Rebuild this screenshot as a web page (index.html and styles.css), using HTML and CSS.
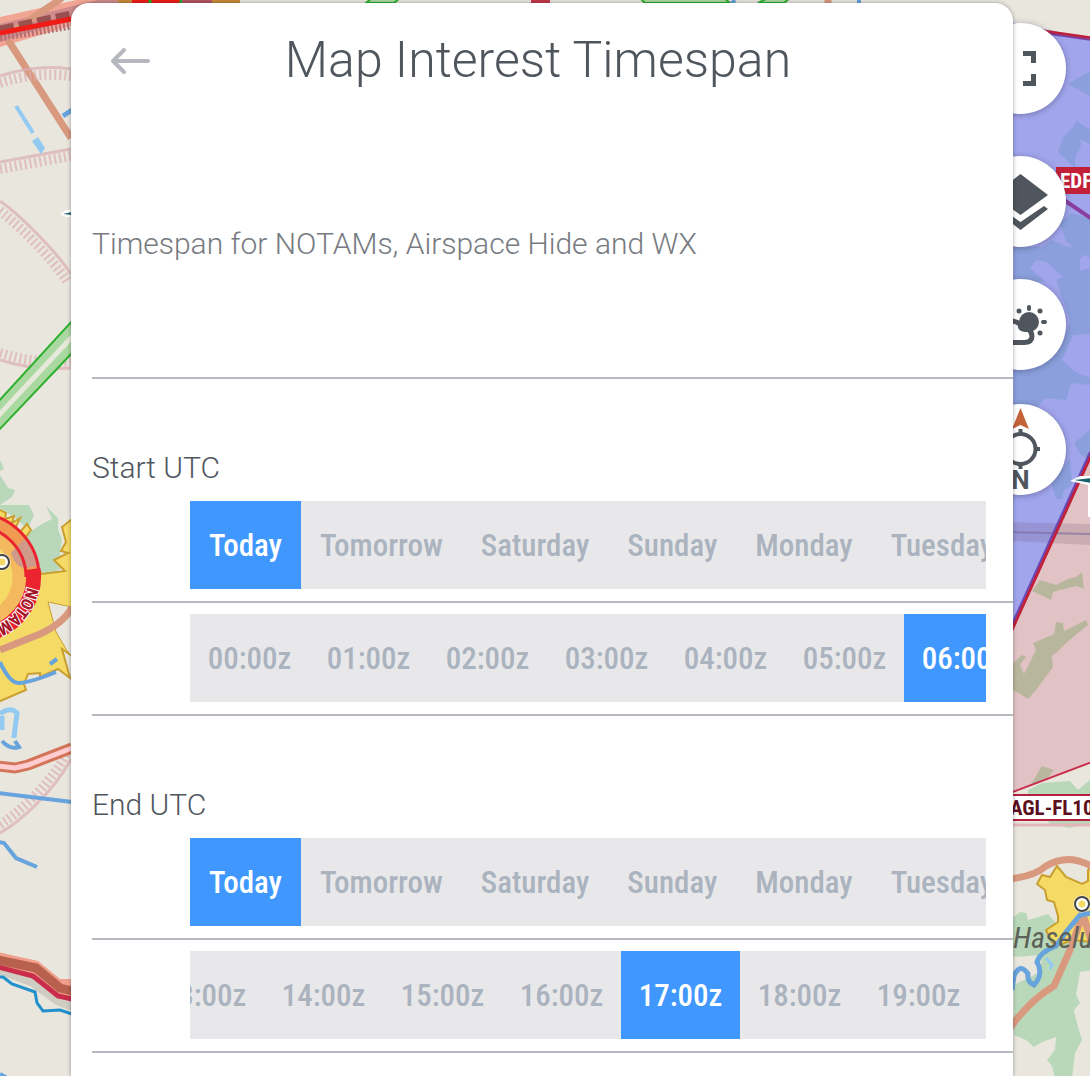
FILE: index.html
```html
<!DOCTYPE html>
<html lang="en">
<head>
<meta charset="utf-8">
<meta name="viewport" content="width=device-width, initial-scale=1">
<title>Map Interest Timespan</title>
<link rel="stylesheet" href="styles.css">
</head>
<body>
<div class="app">
  <svg class="map" viewBox="0 0 1090 1076" preserveAspectRatio="xMidYMin slice" aria-hidden="true">
    <rect width="1090" height="1076" fill="#e9e6de"/>

    <!-- north-west airway and roads -->
    <path d="M0 17L90-3H168L0 47Z" fill="#f3a594"/>
    <path d="M0 24L110-3H140L0 42Z" fill="#cf8c8c"/>
    <path d="M0 37L71 25" stroke="#b56f73" stroke-width="9" stroke-dasharray="2 2"/>
    <path d="M15 30L62-2M8 40L71 138" stroke="#d8997f" stroke-width="7" fill="none"/>
    <path d="M0 29L71 14" stroke="#8c4243" stroke-width="7" stroke-dasharray="14 5" opacity=".8"/>
    <path d="M0 33L71 19" stroke="#f01c18" stroke-width="5"/>
    <path d="M118 1H132M212 1H240" stroke="#c98a3a" stroke-width="5"/>
    <path d="M132 1H180" stroke="#f01c18" stroke-width="5"/>
    <path d="M150 0V3M181 0V3" stroke="#22b022" stroke-width="3"/>
    <path d="M182 1H212" stroke="#b35562" stroke-width="5"/>
    <path d="M366 3L372-2H400L394 3ZM645 3L640-2H724L730 3ZM758 3L768-2H790L784 3Z" fill="#a9d8a0" stroke="#2eb02e" stroke-width="2"/>
    <path d="M531 1H550" stroke="#c5384c" stroke-width="5"/>
    <path d="M828 0V4" stroke="#d8997f" stroke-width="7"/>
    <path d="M859 0V4M735 0L731 4" stroke="#67a3dc" stroke-width="4"/>

    <!-- restricted area rims with hatching -->
    <g fill="none" stroke="#dcaeb2" opacity=".7">
      <path stroke-width="3" d="M0 76C25 68 50 66 71 69M0 162L71 149M0 201C20 215 55 250 71 274M0 360C25 368 50 370 71 368M0 833C20 822 55 790 71 759"/>
      <path stroke-width="10" stroke-dasharray="2 3" d="M0 83C25 75 50 73 71 76M0 169L71 156M-4 208C16 222 51 257 67 281M0 353C25 361 50 363 71 361M-4 827C16 816 51 784 67 753"/>
    </g>
    <path d="M16 106L33 133" stroke="#92caf2" stroke-width="4"/>
    <path d="M32 141L38 137L45 148L41 154Z" fill="#92caf2"/>
    <path d="M63 116L72 110" stroke="#67a3dc" stroke-width="5"/>
    <path d="M60 214L66 210H72V217H66Z" fill="#fff"/>
    <path d="M63 214L72 212V215Z" fill="#17606b"/>
    <path d="M-2 402L72 321V353L-2 431Z" fill="#a9d8a0" stroke="#2eb02e" stroke-width="2"/>
    <path d="M-2 416L72 337" stroke="#e6e8da" stroke-width="5"/>

    <!-- woodland and town, west -->
    <path d="M0 460L4 469L0 471V475L8 488L15 490L12 497L0 505H29L34 515L27 530L20 545L34 570L50 574L62 568L60 552L62 540L58 529V518L46 506L52 519L42 524L30 532L18 520L0 508Z" fill="#b9d8ba"/>
    <path d="M0 510L6 513L5 519L14 516L12 523L20 518L15 529L20 532L27 524L31 530L20 545L42 574L65 571L54 560L68 553L61 551L66 542L62 527L72 519V656L62 649L70 678L58 669L40 677V673L28 674L26 679L24 684L26 690L-2 702V510Z" fill="#f5da66" stroke="#c9a030" stroke-width="2"/>
    <path d="M48 602L72 607V657L66 649L56 632Z" fill="#e9e6de" stroke="#c9a030" stroke-width="1"/>
    <circle cx="-25" cy="577" r="57" fill="#f5da66"/>
    <circle cx="-25" cy="577" r="44" fill="none" stroke="#f4b85e" stroke-width="13"/>
    <circle cx="-25" cy="577" r="58" fill="none" stroke="#f09a52" stroke-width="14"/>
    <path d="M11 553Q16 568 26 568L40 565Q35 549 24 539Z" fill="#cf9a8a"/>
    <path d="M-25 513A64 64 0 0 1 39 577M-25 526A51 51 0 0 1 26 577" fill="none" stroke="#ec2330" stroke-width="3"/>
    <path d="M33 569A58 58 0 0 1-25 635" fill="none" stroke="#ec2330" stroke-width="15"/>
    <path id="ring" d="M28 577A53 53 0 0 1-25 630" fill="none"/>
    <text class="map-notam"><textPath href="#ring" startOffset="10">NOTAM</textPath></text>
    <circle cx="2" cy="562" r="6" fill="#f5da66" stroke="#fff" stroke-width="5"/>
    <circle cx="2" cy="562" r="7" fill="none" stroke="#444" stroke-width="2"/>
    <path d="M0 650L40 634Q64 623 72 607" fill="none" stroke="#d8997f" stroke-width="7"/>
    <path d="M0 662Q10 684 20 683Q32 682 56 672M50 664L57 659" fill="none" stroke="#67a3dc" stroke-width="4"/>
    <path d="M0 714Q10 706 17 713L14 738M2 716V730" fill="none" stroke="#92caf2" stroke-width="5"/>
    <path d="M2 741Q10 750 19 747L15 741" fill="none" stroke="#67a3dc" stroke-width="4"/>
    <path d="M-2 766L15 768L28 765L72 748" fill="none" stroke="#d37558" stroke-width="11"/>
    <path d="M-2 766L15 768L28 765L72 748" fill="none" stroke="#ffccd0" stroke-width="5"/>
    <path d="M-2 793L72 802M-2 842L4 843L16 858L37 867M0 1074L9 1079" fill="none" stroke="#67a3dc" stroke-width="4"/>

    <!-- south-west boundary -->
    <path d="M-2 968L33 978L58 998L72 1002V1011L56 1005L30 986L-2 974Z" fill="#cfccc2"/>
    <path d="M-2 952L38 961L60 979H72V999L58 996L33 975L-2 966Z" fill="#f0a08c"/>
    <path d="M-2 960L36 968L60 988L72 991" fill="none" stroke="#b9614f" stroke-width="9"/>
    <path d="M-2 967L33 976L58 996L72 999" fill="none" stroke="#c92d4b" stroke-width="5"/>
    <path d="M-2 977H3L12 984L35 992L37 1003L43 1011L60 1010L72 1014" fill="none" stroke="#2190cc" stroke-width="3"/>

    <!-- control zone, east -->
    <path d="M1010 22L1092 39V452L1010 633Z" fill="#a1a5ec"/>
    <g fill="#8a9fdb">
      <path d="M1068 84L1092 70V97ZM1073 127L1077 121L1092 131V145L1080 139L1081 145L1075 157V168L1058 152L1063 138ZM1060 223L1072 213L1090 218V258L1066 242ZM1014 247H1042L1052 240L1068 247L1080 245L1092 250L1080 258V276L1064 278L1047 262L1036 260L1030 268L1046 282H1014Z"/>
      <path d="M1056 280L1074 272L1092 268V334L1073 335L1062 360L1075 372L1090 378V385L1071 383L1066 400L1045 398L1036 410H1014V366H1042L1062 345L1070 320Z"/>
      <path d="M1074 443L1090 430V458L1082 456ZM1050 475L1062 470L1070 458L1072 485L1063 491V499H1056L1052 485Z"/>
    </g>
    <path d="M1064 200L1092 219" stroke="#8b3f9e" stroke-width="4"/>
    <path d="M1036 30L1092 38" stroke="#c22038" stroke-width="3"/>
    <path d="M1036 32L1092 40" stroke="#7b3f9e" stroke-width="2"/>
    <rect x="1056" y="167" width="36" height="27" fill="#c22038"/>
    <text class="map-label map-label--inverse" x="1060" y="188">EDF</text>

    <!-- danger area -->
    <path d="M1092 452L1010 633V793L1092 762Z" fill="#e2c3c5"/>
    <g fill="#b9b69e">
      <path d="M1032 591L1040 580L1056 585L1068 579L1076 577L1082 572L1084 589L1076 586L1053 592L1051 600Z"/>
      <path d="M1010 666L1022 655L1026 657L1020 665L1024 674L1036 650L1033 643L1054 634L1056 622L1063 623L1064 631L1086 620L1088 625L1066 643L1056 653L1052 656L1053 667L1036 690L1028 699L1010 688Z"/>
    </g>
    <path d="M1010 522L1092 524V545L1010 541Z" fill="#6f4f78" opacity=".2"/>
    <path d="M1010 532L1092 534" stroke="#7d6a9a" stroke-width="2" opacity=".6"/>
    <path d="M1092 452L1010 633" stroke="#c22038" stroke-width="4"/>
    <path d="M1090 452L1008 633" stroke="#6a48b4" stroke-width="2"/>
    <path d="M1070 481L1080 476H1092V517H1088V485Z" fill="#fff"/>
    <path d="M1074 480L1092 478V483Z" fill="#17606b"/>

    <!-- woodland and town, south-east -->
    <g fill="#b9d8ba">
      <path d="M1028 790L1042 783L1070 781L1078 790L1092 778V826H1076L1070 828L1050 824L1028 800Z"/>
      <path d="M1010 920L1020 912L1026 913L1028 920L1048 914L1062 930L1074 940L1092 930V970L1080 972L1078 984L1076 994L1080 1003L1074 1010L1078 1027L1082 1040L1075 1053L1072 1078H1055L1052 1066L1047 1060L1055 1050L1056 1037L1042 1042L1034 1047L1026 1040L1014 1035V985L1040 972L1042 955L1010 957Z"/>
    </g>
    <path d="M1030 786L1042 766L1054 770L1046 780Z" fill="#b9b69e"/>
    <path d="M1010 793L1092 762" stroke="#c92d4b" stroke-width="2"/>
    <path d="M1010 825H1092" stroke="#e4b6b8" stroke-width="3"/>
    <path d="M1037 884L1042 875L1050 877L1057 866L1066 877L1082 884L1088 881V870L1094 866V942L1072 940L1057 946L1052 942L1046 930L1058 922V916L1054 902L1047 900L1045 890Z" fill="#f5da66" stroke="#c9a030" stroke-width="2"/>
    <path d="M1010 879Q1035 876 1046 866Q1070 852 1094 868M1083 914L1070 950L1054 986Q1030 1000 1010 1028M1083 914L1094 950" fill="none" stroke="#d8997f" stroke-width="7"/>
    <path d="M1092 913L1080 915L1066 932L1056 946Q1040 952 1037 962Q1044 974 1034 985Q1027 982 1028 974Q1020 962 1014 976L1012 990" fill="none" stroke="#67a3dc" stroke-width="5"/>
    <path d="M1046 958L1052 965L1050 969" fill="none" stroke="#92caf2" stroke-width="3"/>
    <circle cx="1082" cy="904" r="6" fill="#f5da66" stroke="#fff" stroke-width="5"/>
    <circle cx="1082" cy="904" r="7" fill="none" stroke="#444" stroke-width="2"/>
    <rect x="1008" y="795" width="84" height="25" fill="#fff"/>
    <path d="M1008 795H1092M1008 820H1092" stroke="#b52040" stroke-width="2"/>
    <text class="map-label" x="1010" y="815">AGL-FL10</text>
    <text class="map-town" x="1013" y="948">Haselu</text>
  </svg>

  <nav class="controls" aria-label="Map controls">
    <button class="fab fab--screen" type="button" aria-label="Full screen">
      <svg viewBox="0 0 91 91" fill="none" stroke="#50565d" stroke-width="5"><path d="M48 30.500H58.500V40M48 60.500H58.500V51M38 30.500H27.500V40M38 60.500H27.500V51"/></svg>
    </button>
    <button class="fab" type="button" aria-label="Layers">
      <svg viewBox="0 0 91 91" fill="#50565d"><path d="M45.500 18L73 39L45.500 59L18 39ZM69 50L73 53L45.500 74L18 53L22 50L45.500 66Z"/></svg>
    </button>
    <button class="fab" type="button" aria-label="Weather">
      <svg viewBox="0 0 91 91" fill="#50565d"><circle cx="54" cy="43" r="10"/><rect x="52" y="26" width="4" height="6" rx="2"/><rect x="66" y="41" width="6" height="4" rx="2"/><circle cx="44" cy="32" r="2.500"/><circle cx="65" cy="32" r="2.500"/><circle cx="65" cy="54" r="2.500"/><path d="M26 63.500H49Q57 63.500 57 57Q57 53 53 50Q45 52 45 45Q40 41 26 41" fill="none" stroke="#50565d" stroke-width="5"/></svg>
    </button>
    <button class="fab fab--compass" type="button" aria-label="North up">
      <svg viewBox="0 0 91 91"><path d="M45.500 4L54 25L45.500 21L37 25Z" fill="#c4623a"/><circle cx="45.500" cy="45" r="15" fill="none" stroke="#50565d" stroke-width="4"/><path d="M45.500 25V31M45.500 59V65M59 45H65M26 45H32" stroke="#50565d" stroke-width="4"/><text class="fab-letter" x="45.500" y="85">N</text></svg>
    </button>
  </nav>

  <main class="panel">
    <header class="panel-header">
      <button class="back" type="button" aria-label="Back">
        <svg width="42" height="28" viewBox="0 0 42 28" fill="none" stroke="#b7b8bf" stroke-width="4" stroke-linecap="round" stroke-linejoin="round"><path d="M39 14H4M15 3L4 14L15 25"/></svg>
      </button>
      <h1 class="title">Map Interest Timespan</h1>
    </header>
    <p class="intro">Timespan for NOTAMs, Airspace Hide and WX</p>

    <section class="group" aria-labelledby="start">
      <h2 class="group-title" id="start">Start UTC</h2>
      <div class="row">
        <div class="strip">
          <button class="option option--on" type="button" aria-pressed="true">Today</button>
          <button class="option" type="button">Tomorrow</button>
          <button class="option" type="button">Saturday</button>
          <button class="option" type="button">Sunday</button>
          <button class="option" type="button">Monday</button>
          <button class="option" type="button">Tuesday</button>
        </div>
      </div>
      <div class="row">
        <div class="strip strip--hours">
          <button class="option" type="button">00:00z</button>
          <button class="option" type="button">01:00z</button>
          <button class="option" type="button">02:00z</button>
          <button class="option" type="button">03:00z</button>
          <button class="option" type="button">04:00z</button>
          <button class="option" type="button">05:00z</button>
          <button class="option option--on" type="button" aria-pressed="true">06:00z</button>
        </div>
      </div>
    </section>

    <section class="group" aria-labelledby="end">
      <h2 class="group-title" id="end">End UTC</h2>
      <div class="row">
        <div class="strip">
          <button class="option option--on" type="button" aria-pressed="true">Today</button>
          <button class="option" type="button">Tomorrow</button>
          <button class="option" type="button">Saturday</button>
          <button class="option" type="button">Sunday</button>
          <button class="option" type="button">Monday</button>
          <button class="option" type="button">Tuesday</button>
        </div>
      </div>
      <div class="row">
        <div class="strip strip--hours" data-scroll="45">
          <button class="option" type="button">13:00z</button>
          <button class="option" type="button">14:00z</button>
          <button class="option" type="button">15:00z</button>
          <button class="option" type="button">16:00z</button>
          <button class="option option--on" type="button" aria-pressed="true">17:00z</button>
          <button class="option" type="button">18:00z</button>
          <button class="option" type="button">19:00z</button>
          <button class="option" type="button">20:00z</button>
        </div>
      </div>
    </section>
  </main>
</div>
<script src="script.js"></script>
</body>
</html>
```
FILE: styles.css
```css
* {
  box-sizing: border-box;
}

body {
  margin: 0;
  font-family: Roboto, "Liberation Sans", sans-serif;
  font-weight: 300;
  color: #50565d;
}

button {
  border: 0;
  padding: 0;
  margin: 0;
  background: none;
  font: inherit;
  color: inherit;
  cursor: pointer;
}

.app {
  position: relative;
  display: flex;
  height: 100vh;
  overflow: hidden;
  padding: 3px 77px 0 71px;
}

/* Map */
.map {
  position: absolute;
  inset: 0;
  width: 100%;
  height: 100%;
}

.map-label,
.map-notam,
.map-town {
  font-family: "Roboto Condensed", Roboto, "Liberation Sans", sans-serif;
  font-weight: 700;
}

.map-label {
  font-size: 21px;
  fill: #5c0f1c;
}

.map-label--inverse {
  fill: #fff;
}

.map-notam {
  font-size: 17px;
  fill: #a3142a;
  stroke: #fff;
  stroke-width: 2px;
  paint-order: stroke;
}

.map-town {
  font-size: 30px;
  font-weight: 400;
  font-style: italic;
  fill: #5c6258;
}

/* Floating map controls */
.controls {
  position: absolute;
  top: 23px;
  right: 24px;
  display: flex;
  flex-direction: column;
  gap: 32px;
}

.fab {
  width: 91px;
  height: 91px;
  border-radius: 50%;
  background: #fff;
  box-shadow: 0 1px 6px rgba(40, 40, 70, 0.4);
}

.fab svg {
  display: block;
  width: 100%;
  height: 100%;
}

.fab--screen {
  margin-bottom: 10px;
}

.fab--compass {
  margin-top: 2px;
}

.fab-letter {
  font-size: 26px;
  font-weight: 700;
  text-anchor: middle;
  fill: #50565d;
}

/* Panel */
.panel {
  position: relative;
  flex: 1;
  min-width: 0;
  padding-left: 21px;
  border-radius: 18px 18px 0 0;
  background: #fff;
  box-shadow: 0 0 4px rgba(0, 0, 0, 0.35);
}

.panel-header {
  display: grid;
  grid-template-columns: 1fr auto 1fr;
  align-items: center;
  height: 108px;
  padding: 6px 29px 0 0;
}

.back {
  justify-self: start;
  display: flex;
  padding: 9px 17px 7px;
}

.title {
  margin: 0;
  font-size: 50px;
  line-height: 60px;
  font-weight: 300;
}

.intro {
  margin: 0;
  padding: 115px 0;
  border-bottom: 2px solid #b5bac1;
  font-size: 30px;
  line-height: 36px;
  color: #777b81;
}

.group-title {
  margin: 0;
  padding: 71px 0 4px;
  font-size: 30px;
  line-height: 36px;
  font-weight: 300;
}

.row {
  padding: 11px 27px 12px 98px;
  border-bottom: 2px solid #b5bac1;
}

.strip {
  display: flex;
  height: 88px;
  overflow-x: auto;
  scrollbar-width: none;
  background: #e8e8ea;
}

.option {
  flex: none;
  padding: 0 19px;
  font-family: "Roboto Condensed", Roboto, "Liberation Sans", sans-serif;
  font-size: 31px;
  font-weight: 500;
  color: #abb3bf;
}

.strip--hours .option {
  width: 119px;
  padding: 0;
}

.option--on {
  background: #4098ff;
  color: #fff;
}
```
FILE: script.js
```javascript
document.querySelectorAll("[data-scroll]").forEach((strip) => {
  strip.scrollLeft = Number(strip.dataset.scroll);
});
```
